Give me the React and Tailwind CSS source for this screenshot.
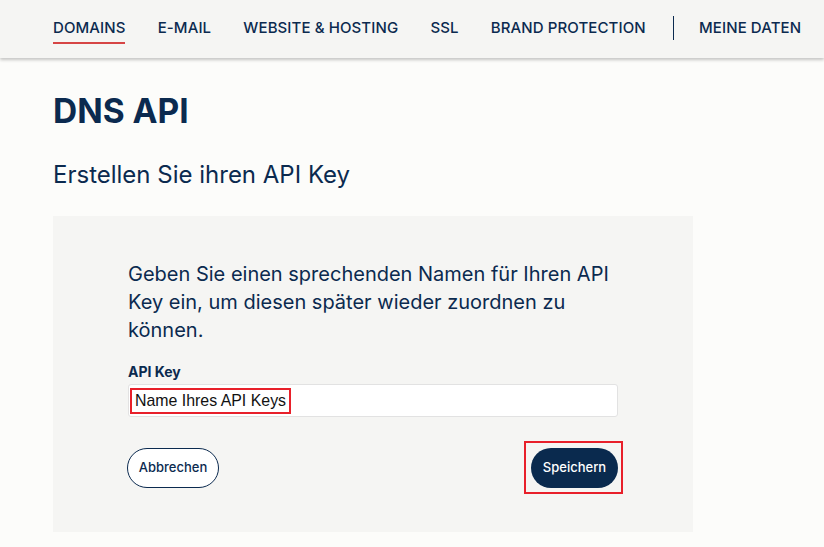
import React from "react";

const navItems = ["DOMAINS", "E-MAIL", "WEBSITE & HOSTING", "SSL", "BRAND PROTECTION"];

const App = () => {
  return (
    <div className="min-h-[547px] bg-[#fcfcfa] text-[#0b2a4f]" style={{ fontFamily: "Inter, 'Noto Sans', sans-serif" }}>
      {/* Header */}
      <header className="h-[58px] bg-[#f5f5f3] shadow-[0_2px_3px_rgba(0,0,0,0.22)] relative">
        <nav className="flex items-center h-full pl-[53px] gap-[32.2px] text-[15px] font-medium tracking-[0.1px] pb-[2px]">
          {navItems.map((item, i) => (
            <a
              key={item}
              className={`relative leading-[20px] whitespace-nowrap ${
                i === 0 ? "after:absolute after:left-0 after:right-0 after:top-[24px] after:h-[2px] after:bg-[#d64545]" : ""
              }`}
            >
              {item}
            </a>
          ))}
          <span className="w-px h-[24px] bg-[#0b2a4f] ml-[-5px] mr-[-7px]" />
          <a className="leading-[20px] whitespace-nowrap">MEINE DATEN</a>
        </nav>
      </header>

      {/* Content */}
      <main className="px-[53px] pt-[33px]">
        <h1 className="text-[33.5px] font-bold leading-[40px]">DNS API</h1>
        <h2 className="text-[24px] leading-[30px] mt-[29px]">Erstellen Sie ihren API Key</h2>

        <section className="mt-[26px] w-[640px] bg-[#f5f5f3] px-[75px] pt-[44px] pb-[38px]">
          <p className="text-[20px] leading-[28px]">
            Geben Sie einen sprechenden Namen für Ihren API Key ein, um diesen später wieder zuordnen zu können.
          </p>

          <label className="block mt-[19px] text-[14px] font-bold leading-[18px]">API Key</label>
          <div className="mt-[3px] h-[33px] bg-white border border-[#e2e2e2] rounded-[3px] flex items-center px-[1px]">
            <span
              className="border-2 border-[#e8202a] px-[3px] h-[26px] flex items-center text-[15.9px] text-[#111]"
              style={{ fontFamily: "'Liberation Sans', Arial, sans-serif" }}
            >
              Name Ihres API Keys
            </span>
          </div>

          <div className="mt-[24px] flex justify-between items-center">
            <button className="h-[40px] w-[92px] rounded-full border border-[#0b2a4f] bg-white text-[13px] font-medium text-[#0b2a4f] ml-[-1px]">
              Abbrechen
            </button>
            <div className="border-2 border-[#e8202a] pl-[5px] pr-[3px] pt-[5px] pb-[4px] mr-[-5px]">
              <button className="block h-[40px] w-[87px] rounded-full bg-[#0a2a4e] text-[13px] font-medium text-white">
                Speichern
              </button>
            </div>
          </div>
        </section>
      </main>
    </div>
  );
};

export default App;
